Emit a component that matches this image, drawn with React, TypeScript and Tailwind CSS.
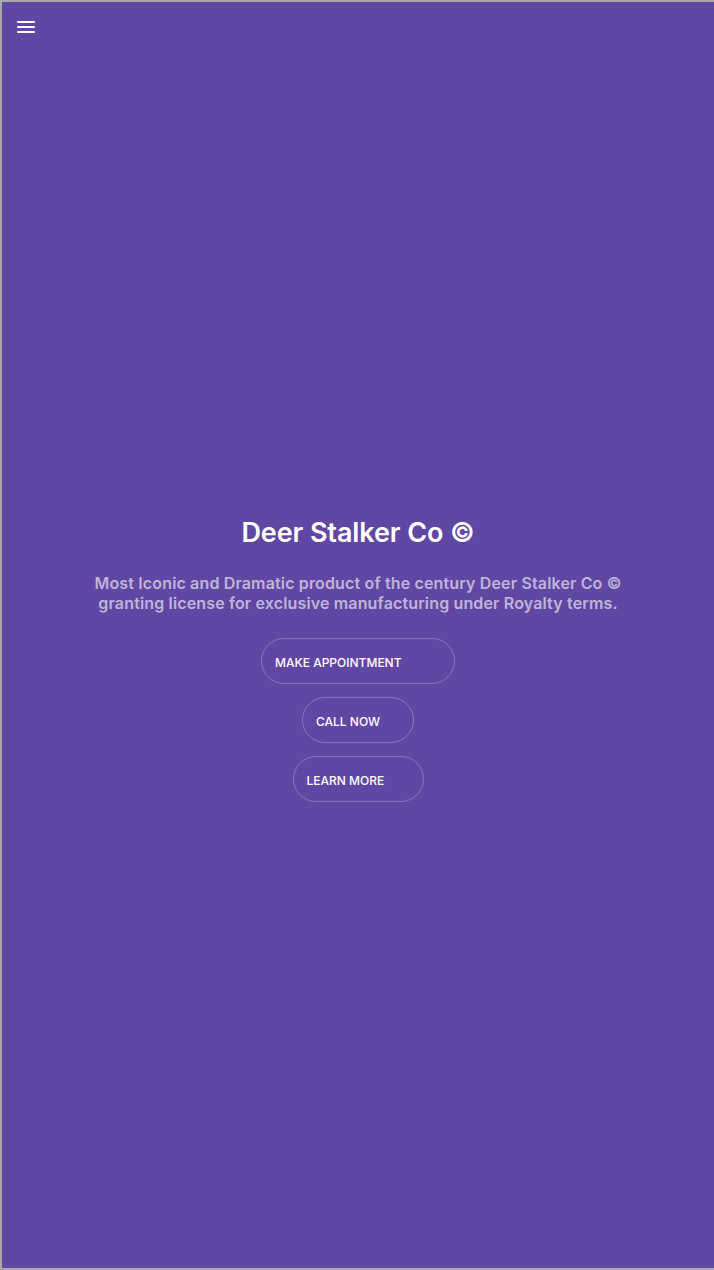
import React from "react";

export default function App() {
  const font = { fontFamily: "Inter, 'Noto Sans', sans-serif" };
  return (
    <div
      className="h-[1270px] w-full bg-[#5f47a3] border-t-2 border-l-2 border-b-2 border-[#a9a9a9] flex flex-col"
      style={font}
    >
      <div className="pl-[15px] pt-[18px] h-[40px]">
        <div className="flex flex-col gap-[3px] w-[18px] pt-[1px]">
          <div className="h-[2px] bg-white rounded-sm" />
          <div className="h-[2px] bg-white rounded-sm" />
          <div className="h-[2px] bg-white rounded-sm" />
        </div>
      </div>
      <div className="flex flex-col items-center pt-[475px]">
        <h1 className="text-[27px] leading-8 font-semibold text-white tracking-[-0.1px]">
          Deer Stalker Co ©
        </h1>
        <p className="mt-[24px] text-center text-[16px] leading-5 font-semibold text-white/60 tracking-[0.15px]">
          Most Iconic and Dramatic product of the century Deer Stalker Co ©
          <br />
          granting license for exclusive manufacturing under Royalty terms.
        </p>
        <div className="mt-[25px] flex flex-col items-center gap-[13px]">
          <button className="w-[194px] h-[46px] rounded-full border border-white/25 text-left pl-[13px] pt-[3px] text-[12px] font-medium text-white">
            MAKE APPOINTMENT
          </button>
          <button className="w-[112px] h-[46px] rounded-full border border-white/25 text-left pl-[13px] pt-[3px] text-[12px] font-medium text-white">
            CALL NOW
          </button>
          <button className="w-[131px] h-[46px] rounded-full border border-white/25 text-left pl-[13px] pt-[3px] text-[12px] font-medium text-white">
            LEARN MORE
          </button>
        </div>
      </div>
    </div>
  );
}
